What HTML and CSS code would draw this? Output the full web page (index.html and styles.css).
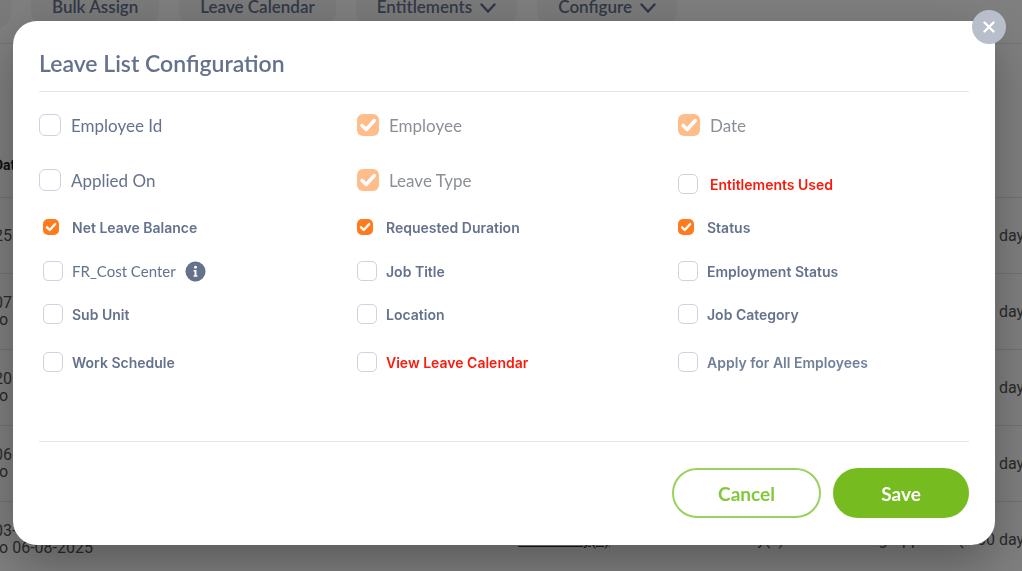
FILE: index.html
```html
<!DOCTYPE html>
<html lang="en">
<head>
    <meta charset="UTF-8">
    <meta name="viewport" content="width=device-width, initial-scale=1.0">
    <title>Leave List Configuration</title>
    <link rel="stylesheet" href="styles.css">
</head>
<body>
    <!-- Leave list behind the dialog -->
    <main class="page">
        <nav class="toolbar">
            <span class="toolbar-edge"></span>
            <button class="tool" type="button">Bulk Assign</button>
            <button class="tool" type="button">Leave Calendar</button>
            <button class="tool" type="button">Entitlements
                <svg width="16" height="10" viewBox="0 0 16 10"><path d="M1.500 1.500L8 8.500L14.500 1.500" fill="none" stroke="currentColor" stroke-width="2.500" stroke-linecap="round"/></svg>
            </button>
            <button class="tool" type="button">Configure
                <svg width="16" height="10" viewBox="0 0 16 10"><path d="M1.500 1.500L8 8.500L14.500 1.500" fill="none" stroke="currentColor" stroke-width="2.500" stroke-linecap="round"/></svg>
            </button>
        </nav>
        <table class="leave-table">
            <colgroup>
                <col class="col-date">
                <col class="col-type">
                <col class="col-days">
                <col class="col-status">
            </colgroup>
            <thead>
                <tr><th>Date</th><th></th><th></th><th></th></tr>
            </thead>
            <tbody>
                <tr><td>25</td><td></td><td></td><td>days)</td></tr>
                <tr><td>07<br>to</td><td></td><td></td><td>days)</td></tr>
                <tr><td>20<br>to</td><td></td><td></td><td>days)</td></tr>
                <tr><td>06<br>to</td><td></td><td></td><td>days)</td></tr>
                <tr><td>03-08-2025<br>to 06-08-2025</td><td><a href="#">Leave Day(s)</a></td><td>Day(s)</td><td>Pending Approval (1.00 days)</td></tr>
            </tbody>
        </table>
    </main>

    <!-- Configuration dialog -->
    <div class="overlay">
        <form class="dialog" role="dialog" aria-labelledby="dialogTitle">
            <button class="close" type="button" aria-label="Close">
                <svg width="12" height="12" viewBox="0 0 12 12"><path d="M1.500 1.500L10.500 10.500M10.500 1.500L1.500 10.500" fill="none" stroke="#fff" stroke-width="2.400" stroke-linecap="round"/></svg>
            </button>
            <h2 id="dialogTitle">Leave List Configuration</h2>

            <div class="options">
                <label class="option large"><input type="checkbox">Employee Id</label>
                <label class="option large locked"><input type="checkbox" checked disabled>Employee</label>
                <label class="option large locked"><input type="checkbox" checked disabled>Date</label>

                <label class="option large"><input type="checkbox">Applied On</label>
                <label class="option large locked"><input type="checkbox" checked disabled>Leave Type</label>
                <label class="option alert spaced"><input type="checkbox">Entitlements Used</label>

                <label class="option inset"><input type="checkbox" checked>Net Leave Balance</label>
                <label class="option"><input type="checkbox" checked>Requested Duration</label>
                <label class="option"><input type="checkbox" checked>Status</label>

                <div class="option inset custom">
                    <input type="checkbox" id="costCenter"><label for="costCenter">FR_Cost Center</label>
                    <svg class="info" width="21" height="21" viewBox="0 0 22 22"><circle cx="11" cy="11" r="10.500" fill="#64728c"/><circle cx="11" cy="6.500" r="1.500" fill="#fff"/><path d="M9 9.500H12V15H13V16.500H9V15H10V11H9Z" fill="#fff"/></svg>
                </div>
                <label class="option"><input type="checkbox">Job Title</label>
                <label class="option"><input type="checkbox">Employment Status</label>

                <label class="option inset"><input type="checkbox">Sub Unit</label>
                <label class="option"><input type="checkbox">Location</label>
                <label class="option"><input type="checkbox">Job Category</label>

                <label class="option inset"><input type="checkbox">Work Schedule</label>
                <label class="option alert"><input type="checkbox">View Leave Calendar</label>
                <label class="option muted"><input type="checkbox">Apply for All Employees</label>
            </div>

            <div class="actions">
                <button class="btn" type="button">Cancel</button>
                <button class="btn btn-save" type="submit">Save</button>
            </div>
        </form>
    </div>
</body>
</html>
```
FILE: styles.css
```css
* {
    box-sizing: border-box;
}
body {
    margin: 0;
    height: 100vh;
    overflow: hidden;
    background: #fff;
    font-family: Roboto, sans-serif;
}
button {
    font-family: Lato, sans-serif;
    cursor: pointer;
}
.page {
    margin: -18px 0 0 -8px;
    overflow: hidden;
}
.toolbar {
    display: flex;
    gap: 20px;
    height: 62px;
    border-bottom: 1px solid #ececf0;
}
.toolbar-edge {
    width: 19px;
    height: 48px;
    background: #f5f5f7;
    border-radius: 0 20px 20px 0;
}
.tool {
    height: 48px;
    padding: 0 21px;
    border: 0;
    border-radius: 20px;
    background: #f5f5f7;
    color: #64728c;
    font-size: 17px;
    font-weight: 600;
    white-space: nowrap;
}
.tool svg {
    margin-left: 4px;
}
.leave-table {
    width: calc(100% + 18px);
    margin-top: 90px;
    border-collapse: collapse;
    table-layout: fixed;
    color: #555;
    font-size: 16px;
    line-height: 17px;
}
.col-date {
    width: 50%;
}
.col-type {
    width: 21%;
}
.col-days {
    width: 7%;
}
.col-status {
    width: 22%;
}
.leave-table th {
    height: 63px;
    padding: 0 2px;
    text-align: left;
    font-size: 14px;
    color: #222;
}
.leave-table td {
    height: 76px;
    padding: 0 2px;
    border-top: 1px solid #e4e4e8;
    white-space: nowrap;
}
.leave-table td:last-child {
    text-align: right;
}
.leave-table a {
    color: #333;
}

/* Dialog */
.overlay {
    position: fixed;
    inset: 0;
    padding: 21px 27px 26px 13px;
    background: rgba(0, 0, 0, 0.5);
}
.dialog {
    position: relative;
    padding: 26px 26px 27px;
    background: #fff;
    border-radius: 24px;
    box-shadow: 0 18px 50px rgba(0, 0, 0, 0.3);
}
.dialog h2 {
    margin: 0;
    padding-bottom: 12px;
    border-bottom: 1px solid #e3e5e8;
    color: #64728c;
    font-family: Lato, sans-serif;
    font-size: 23px;
    font-weight: 600;
    line-height: 32px;
}
.close {
    position: absolute;
    top: -11px;
    right: -11px;
    display: flex;
    align-items: center;
    justify-content: center;
    width: 34px;
    height: 34px;
    padding: 0;
    border: 0;
    border-radius: 50%;
    background: #b9becb;
}
.options {
    display: grid;
    grid-template-columns: 106fr 107fr 97fr;
    grid-template-rows: 54px 56px 38px 50px 36px 60px;
    padding: 6px 0 49px;
    border-bottom: 1px solid #e3e5e8;
}
.option {
    display: flex;
    align-items: center;
    gap: 9px;
    color: #64728c;
    font-family: Inter, sans-serif;
    font-size: 14px;
    font-weight: 600;
}
.option input {
    appearance: none;
    width: 20px;
    height: 20px;
    margin: 0;
    border: 1px solid #cfd3df;
    border-radius: 5px;
    background: #fff center / 12px no-repeat;
}
.option input:checked {
    width: 16px;
    height: 16px;
    margin-right: 4px;
    border: 0;
    background-color: #ff7b1d;
    background-image: url("data:image/svg+xml,%3Csvg xmlns='http://www.w3.org/2000/svg' viewBox='0 0 12 12'%3E%3Cpath d='M2 6.300L4.800 9L10.200 3' fill='none' stroke='white' stroke-width='2.300' stroke-linecap='round' stroke-linejoin='round'/%3E%3C/svg%3E");
}
.inset {
    padding-left: 4px;
}
.large {
    gap: 10px;
    font-family: Lato, sans-serif;
    font-size: 17px;
    font-weight: 400;
}
.large input,
.large input:checked {
    width: 22px;
    height: 22px;
    margin: 0;
    border-radius: 6px;
}
.locked {
    color: #8b9097;
}
.locked input:checked {
    background-color: #ffbd8b;
    background-size: 18px;
}
.spaced {
    gap: 12px;
    align-self: end;
    height: 48px;
}
.alert {
    color: #fb1b0c;
}
.muted {
    color: #71809a;
}
.custom {
    font-family: Lato, sans-serif;
    font-size: 15px;
    font-weight: 400;
}
.actions {
    display: flex;
    justify-content: flex-end;
    gap: 12px;
    padding-top: 26px;
}
.btn {
    width: 149px;
    height: 50px;
    border: 2px solid #9bd15f;
    border-radius: 25px;
    background: #fff;
    color: #83c83b;
    font-size: 19px;
    font-weight: 700;
}
.btn-save {
    width: 136px;
    border-color: #76bc21;
    background: #76bc21;
    color: #fff;
}
```
